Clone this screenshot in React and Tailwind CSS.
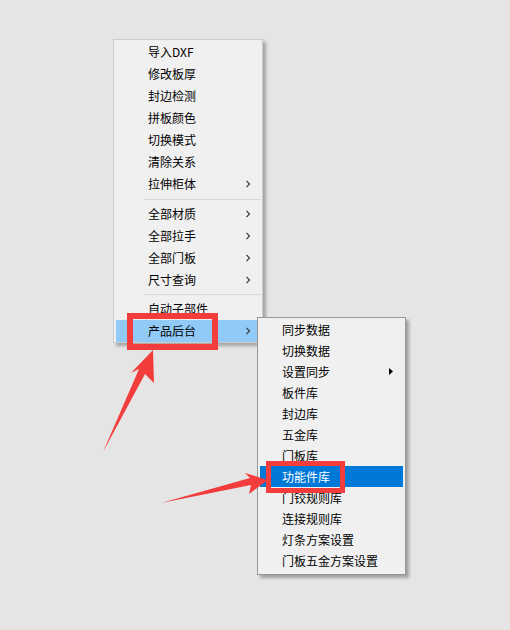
import React from "react";

const mainItems = [
  { label: "导入DXF" },
  { label: "修改板厚" },
  { label: "封边检测" },
  { label: "拼板颜色" },
  { label: "切换模式" },
  { label: "清除关系" },
  { label: "拉伸柜体", sub: true },
  { sep: "h-[8px]" },
  { label: "全部材质", sub: true },
  { label: "全部拉手", sub: true },
  { label: "全部门板", sub: true },
  { label: "尺寸查询", sub: true },
  { sep: "h-[7px]" },
  { label: "自动子部件" },
  { label: "产品后台", sub: true, active: true },
];

const subItems = [
  { label: "同步数据" },
  { label: "切换数据" },
  { label: "设置同步", sub: true },
  { label: "板件库" },
  { label: "封边库" },
  { label: "五金库" },
  { label: "门板库" },
  { label: "功能件库", active: true },
  { label: "门铰规则库" },
  { label: "连接规则库" },
  { label: "灯条方案设置" },
  { label: "门板五金方案设置" },
];

const Chevron = () => (
  <svg width="6" height="8" viewBox="0 0 6 8" className="shrink-0">
    <path d="M1.5 0.8 L4.5 4 L1.5 7.2" fill="none" stroke="#333" strokeWidth="1.1" />
  </svg>
);

const MainMenu = () => (
  <div className="absolute left-[113px] top-[39px] w-[150px] h-[304px] bg-[#f0f0f0] border border-[#cccccc] py-px shadow-[3px_3px_3px_rgba(0,0,0,0.28)]">
    {mainItems.map((it, i) =>
      it.sep ? (
        <div key={i} className={`${it.sep} flex items-center pl-[30px] pr-px`}>
          <div className="h-px w-full bg-[#d7d7d7]" />
        </div>
      ) : (
        <div
          key={i}
          className={`h-[22px] ml-[2px] flex items-center justify-between pl-[32px] pr-[11px] ${
            it.active ? "bg-[#91c9f7]" : ""
          }`}
        >
          <span className="text-[12px] leading-none text-black">{it.label}</span>
          {it.sub && <Chevron />}
        </div>
      )
    )}
  </div>
);

const SubMenu = () => (
  <div className="absolute left-[257px] top-[317px] w-[149px] h-[258px] bg-[#f0f0f0] border border-[#979797] py-px shadow-[3px_3px_3px_rgba(0,0,0,0.3)]">
    {subItems.map((it, i) => (
      <div
        key={i}
        className={`h-[21px] mx-[2px] flex items-center justify-between pl-[22px] pr-[10px] ${
          it.active ? "bg-[#0078d7] text-white" : "text-black"
        }`}
      >
        <span className="text-[12px] leading-none">{it.label}</span>
        {it.sub && (
          <svg width="4" height="7" viewBox="0 0 4 7">
            <path d="M0 0 L4 3.5 L0 7 Z" fill="#000" />
          </svg>
        )}
      </div>
    ))}
  </div>
);

const Annotations = () => (
  <>
    <div className="absolute left-[127px] top-[313px] w-[91px] h-[37px] border-[6px] border-[#f33c3c]" />
    <div className="absolute left-[266px] top-[461px] w-[79px] h-[32px] border-[5px] border-[#f33c3c]" />
    <svg className="absolute left-0 top-0" width="510" height="630" viewBox="0 0 510 630">
      <path
        d="M103 452 L139 369 L131 373 L153 350 L154 383 L145 374 Z"
        fill="#f33c3c"
      />
      <path
        d="M161 503 L250 478 L245 473 L268 480 L249 494 L251 485 Z"
        fill="#f33c3c"
      />
    </svg>
  </>
);

export default function App() {
  return (
    <div
      className="relative w-[510px] h-[630px] bg-[#e5e5e5] overflow-hidden"
      style={{ fontFamily: '"Noto Sans CJK SC", "Noto Sans", sans-serif' }}
    >
      <MainMenu />
      <SubMenu />
      <Annotations />
    </div>
  );
}
